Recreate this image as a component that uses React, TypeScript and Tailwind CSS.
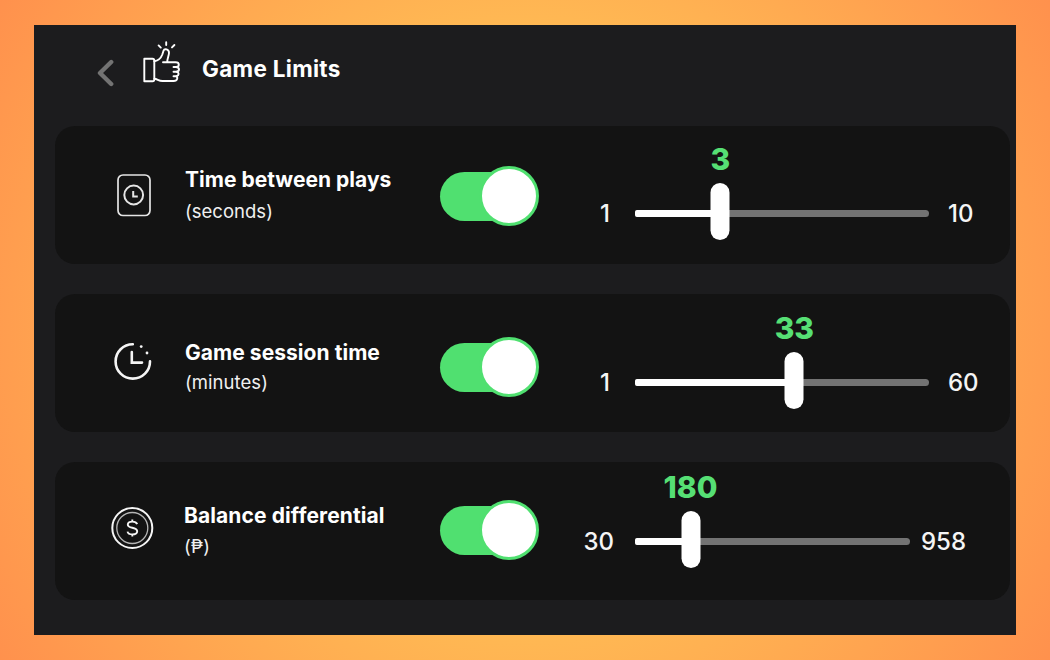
import type { ReactNode } from "react";

type Limit = {
  id: string;
  title: string;
  unit: string;
  icon: ReactNode;
  min: number;
  max: number;
  value: number;
  percent: number;
  // per-row spacing, the rows are not on one shared baseline
  labelClass: string;
  unitClass: string;
  switchClass: string;
  sliderClass: string;
  minClass: string;
  trackClass: string;
  maxClass: string;
};

const limits: Limit[] = [
  {
    id: "plays",
    title: "Time between plays",
    unit: "(seconds)",
    icon: <CardClockIcon />,
    min: 1,
    max: 10,
    value: 3,
    percent: 29,
    labelClass: "pt-[40px] tracking-[0.02px]",
    unitClass: "mt-[5px]",
    switchClass: "mt-[40px]",
    sliderClass: "pt-[16px]",
    minClass: "pr-[25px]",
    trackClass: "w-[294px]",
    maxClass: "ml-[19px]",
  },
  {
    id: "session",
    title: "Game session time",
    unit: "(minutes)",
    icon: <SessionClockIcon />,
    min: 1,
    max: 60,
    value: 33,
    percent: 54.2,
    labelClass: "pt-[45px] tracking-[0.05px]",
    unitClass: "mt-[3px]",
    switchClass: "mt-[43px]",
    sliderClass: "pt-[17px]",
    minClass: "pr-[25px]",
    trackClass: "w-[294px]",
    maxClass: "ml-[19px]",
  },
  {
    id: "balance",
    title: "Balance differential",
    unit: "(₱)",
    icon: <CoinIcon />,
    min: 30,
    max: 958,
    value: 180,
    percent: 20.2,
    labelClass: "-ml-px pt-[40px] tracking-[0.1px]",
    unitClass: "mt-[4px]",
    switchClass: "mt-[38px] ml-px",
    sliderClass: "pt-[8px]",
    minClass: "pr-[21px]",
    trackClass: "w-[275px]",
    maxClass: "ml-[11px]",
  },
];

export default function App() {
  return (
    <div className="h-[660px] w-[1050px] overflow-hidden bg-[radial-gradient(circle_farthest-corner_at_center,#ffde59,#ff914d)] pl-[34px] pt-[25px] font-['Inter',sans-serif] text-white">
      <main className="h-[610px] w-[982px] bg-[#1c1c1e]">
        <Header />
        <div className="flex flex-col gap-[30px] pl-[21px]">
          {limits.map((limit) => (
            <LimitRow key={limit.id} limit={limit} />
          ))}
        </div>
      </main>
    </div>
  );
}

const Header = () => (
  <header className="flex h-[101px] items-start pl-[62px]">
    <button aria-label="Back" className="mt-[34px]">
      <svg width="18" height="28" viewBox="0 0 18 28" fill="none">
        <path
          d="M15.2 3 L4 14 L15.2 25"
          stroke="#737373"
          strokeWidth="4.4"
          strokeLinecap="round"
          strokeLinejoin="round"
        />
      </svg>
    </button>
    <ThumbIcon />
    <h1 className="ml-[21px] mt-[30px] text-[22.5px] font-bold leading-7 tracking-[0.3px]">
      Game Limits
    </h1>
  </header>
);

const LimitRow = ({ limit }: { limit: Limit }) => (
  <section className="flex h-[138px] w-[955px] items-start rounded-[20px] bg-[#131313]">
    <div className="w-[130px] shrink-0">{limit.icon}</div>
    <div className={`w-[255px] shrink-0 ${limit.labelClass}`}>
      <h2 className="whitespace-nowrap text-[21px] font-bold leading-7">{limit.title}</h2>
      <p className={`text-[18.5px] leading-6 text-[#f0f0f0] ${limit.unitClass}`}>{limit.unit}</p>
    </div>
    <Switch className={limit.switchClass} />
    <Slider limit={limit} />
  </section>
);

const Switch = ({ className }: { className: string }) => (
  <button
    role="switch"
    aria-checked="true"
    className={`flex h-[60px] w-[99px] shrink-0 items-center ${className}`}
  >
    <span className="h-[49px] w-[80px] rounded-l-full bg-[#50e070]" />
    <span className="-ml-[41px] size-[60px] shrink-0 rounded-full border-[3px] border-[#50e070] bg-white" />
  </button>
);

const Slider = ({ limit }: { limit: Limit }) => (
  <div className={`flex items-start ${limit.sliderClass}`}>
    <span
      className={`mt-[56px] w-[96px] text-right text-[24px] font-medium leading-8 text-[#f5f5f5] ${limit.minClass}`}
    >
      {limit.min}
    </span>
    <div className={`relative mt-[68px] h-[7px] rounded-full bg-[#737373] ${limit.trackClass}`}>
      <div className="h-full rounded-l-[2px] bg-white" style={{ width: `${limit.percent}%` }} />
      <div
        className="absolute -top-[27px] h-[57px] w-[19px] -translate-x-1/2 rounded-full bg-white"
        style={{ left: `${limit.percent}%` }}
      />
      <output
        className="absolute -top-[67px] -translate-x-1/2 text-[30px] font-extrabold leading-8 text-[#56df74]"
        style={{ left: `${limit.percent}%` }}
      >
        {limit.value}
      </output>
    </div>
    <span
      className={`mt-[56px] text-[24px] font-medium leading-8 text-[#f5f5f5] ${limit.maxClass}`}
    >
      {limit.max}
    </span>
  </div>
);

function ThumbIcon() {
  return (
    <svg
      className="ml-[28px] mt-[16px]"
      width="39"
      height="42"
      viewBox="0 0 39 42"
      fill="none"
      stroke="white"
      strokeWidth="1.9"
      strokeLinejoin="round"
      strokeLinecap="round"
    >
      <path d="M2.3 17.8 H10.5 Q12.3 17.8 12.3 19.5 V38.5 Q12.3 40.3 10.5 40.3 H2.3 Z" />
      <path d="M12.3 20.3 C16.5 19.5 19 17 20.3 13.5 L21.6 9.5 C22.4 7.2 27.2 8 27 12 C26.8 15.2 25.2 17.5 25.2 21.3 M21 21.3 H33.5 Q36.8 21.3 36.8 23.7 Q36.8 26 34 26 H31.5 M34 26 Q37.3 26.5 37 28.8 Q36.6 30.7 34 30.7 H31.5 M34 30.7 Q37 31.2 36.5 33.3 Q36 35.2 33.3 35.2 H31.5 M33.3 35.2 Q35.8 35.8 35.2 37.8 Q34.6 40 31.5 40 H20.5 C16.5 40 15.5 38 12.3 37.8" />
      <path d="M24.2 1.2 V4 M16.6 4.4 L18.8 6.6 M32.4 4 L30 6.4" />
    </svg>
  );
}

function CardClockIcon() {
  return (
    <svg className="ml-[62px] mt-[48px]" width="34" height="43" viewBox="0 0 34 43" fill="none" stroke="#e5e5e5">
      <rect x="1" y="1" width="32" height="40.5" rx="5" strokeWidth="1.7" />
      <circle cx="16.7" cy="21" r="9.4" strokeWidth="2" />
      <path d="M16.2 17 V22.4 H20.8" strokeWidth="2" />
    </svg>
  );
}

function SessionClockIcon() {
  return (
    <svg className="ml-[59px] mt-[48px]" width="39" height="39" viewBox="0 0 39 39" fill="none" stroke="#f5f5f5">
      <path
        d="M18.8 2.2 A17.2 17.2 0 1 0 36 19.4"
        strokeWidth="2.6"
        strokeLinecap="round"
      />
      <path d="M17.8 10 V20.6 H28" strokeWidth="2.6" strokeLinecap="round" />
      <circle cx="27.2" cy="4.6" r="1.4" fill="#f5f5f5" stroke="none" />
      <circle cx="33" cy="11" r="1.4" fill="#f5f5f5" stroke="none" />
    </svg>
  );
}

function CoinIcon() {
  return (
    <svg className="ml-[56px] mt-[44px]" width="43" height="43" viewBox="0 0 43 43" fill="none">
      <circle cx="21.3" cy="22" r="20" stroke="#f5f5f5" strokeWidth="2" />
      <circle cx="21.3" cy="22" r="15.5" stroke="#b5b5b5" strokeWidth="1.3" />
      <path
        d="M26.2 18.2 C25.5 16.5 23.8 15.6 21.3 15.6 C18.5 15.6 16.8 16.9 16.8 18.7 C16.8 22.8 26.2 20.6 26.2 25.2 C26.2 27.2 24.3 28.4 21.3 28.4 C18.6 28.4 16.9 27.3 16.5 25.6 M21.3 13.4 V15.6 M21.3 28.4 V30.6"
        stroke="#f5f5f5"
        strokeWidth="1.9"
      />
    </svg>
  );
}
